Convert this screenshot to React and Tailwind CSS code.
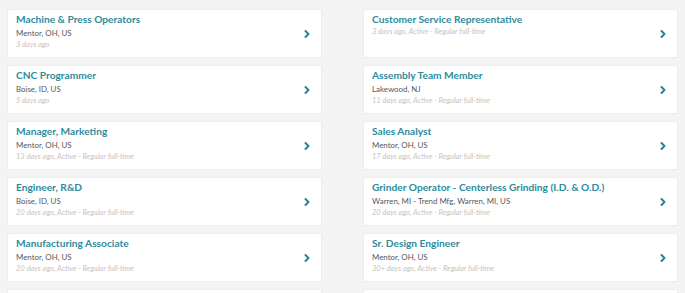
const left = [
    { title: 'Machine & Press Operators', location: 'Mentor, OH, US', meta: '3 days ago' },
    { title: 'CNC Programmer', location: 'Boise, ID, US', meta: '5 days ago' },
    { title: 'Manager, Marketing', location: 'Mentor, OH, US', meta: '13 days ago, Active - Regular full-time' },
    { title: 'Engineer, R&D', location: 'Boise, ID, US', meta: '20 days ago, Active - Regular full-time' },
    { title: 'Manufacturing Associate', location: 'Mentor, OH, US', meta: '20 days ago, Active - Regular full-time' },
]

const right = [
    { title: 'Customer Service Representative', location: '', meta: '3 days ago, Active - Regular full-time' },
    { title: 'Assembly Team Member', location: 'Lakewood, NJ', meta: '11 days ago, Active - Regular full-time' },
    { title: 'Sales Analyst', location: 'Mentor, OH, US', meta: '17 days ago, Active - Regular full-time' },
    { title: 'Grinder Operator - Centerless Grinding (I.D. & O.D.)', location: 'Warren, MI - Trend Mfg, Warren, MI, US', meta: '20 days ago, Active - Regular full-time' },
    { title: 'Sr. Design Engineer', location: 'Mentor, OH, US', meta: '30+ days ago, Active - Regular full-time' },
]

const Chevron = () => (
    <svg width="6" height="8" viewBox="0 0 6 8" className="shrink-0">
        <path d="M1.5 1 L4.5 4 L1.5 7" fill="none" stroke="#2a7f92" strokeWidth="1.9" strokeLinecap="round" strokeLinejoin="round" />
    </svg>
)

const JobCard = ({ job }) => (
    <div className="h-[49px] shrink-0 bg-white border border-[#ededed] rounded-[2px] flex items-center pl-[8px] pr-[11px]">
        <div className="flex-1 min-w-0 self-start pt-[2px]">
            <div className="text-[10.2px] leading-[14px] font-bold text-[#2e8c9c] whitespace-nowrap">{job.title}</div>
            {job.location && <div className="text-[7.9px] leading-[12px] mt-[1px] text-[#585858] whitespace-nowrap">{job.location}</div>}
            <div className="text-[7.5px] leading-[12px] italic text-[#c4c4c4] whitespace-nowrap">{job.meta}</div>
        </div>
        <Chevron />
    </div>
)

const App = () => {
    return (
        <div className="w-[685px] h-[293px] overflow-hidden bg-[#f4f4f4] flex gap-[41px] px-[7px] pt-[9px]" style={{ fontFamily: 'Lato, sans-serif' }}>
            <div className="w-[315px] flex flex-col gap-[7px]">
                {left.map((job, i) => <JobCard key={i} job={job} />)}
                <div className="h-[49px] shrink-0 bg-white border border-[#ededed]" />
            </div>
            <div className="w-[315px] flex flex-col gap-[7px]">
                {right.map((job, i) => <JobCard key={i} job={job} />)}
                <div className="h-[49px] shrink-0 bg-white border border-[#ededed]" />
            </div>
        </div>
    )
}

export default App
